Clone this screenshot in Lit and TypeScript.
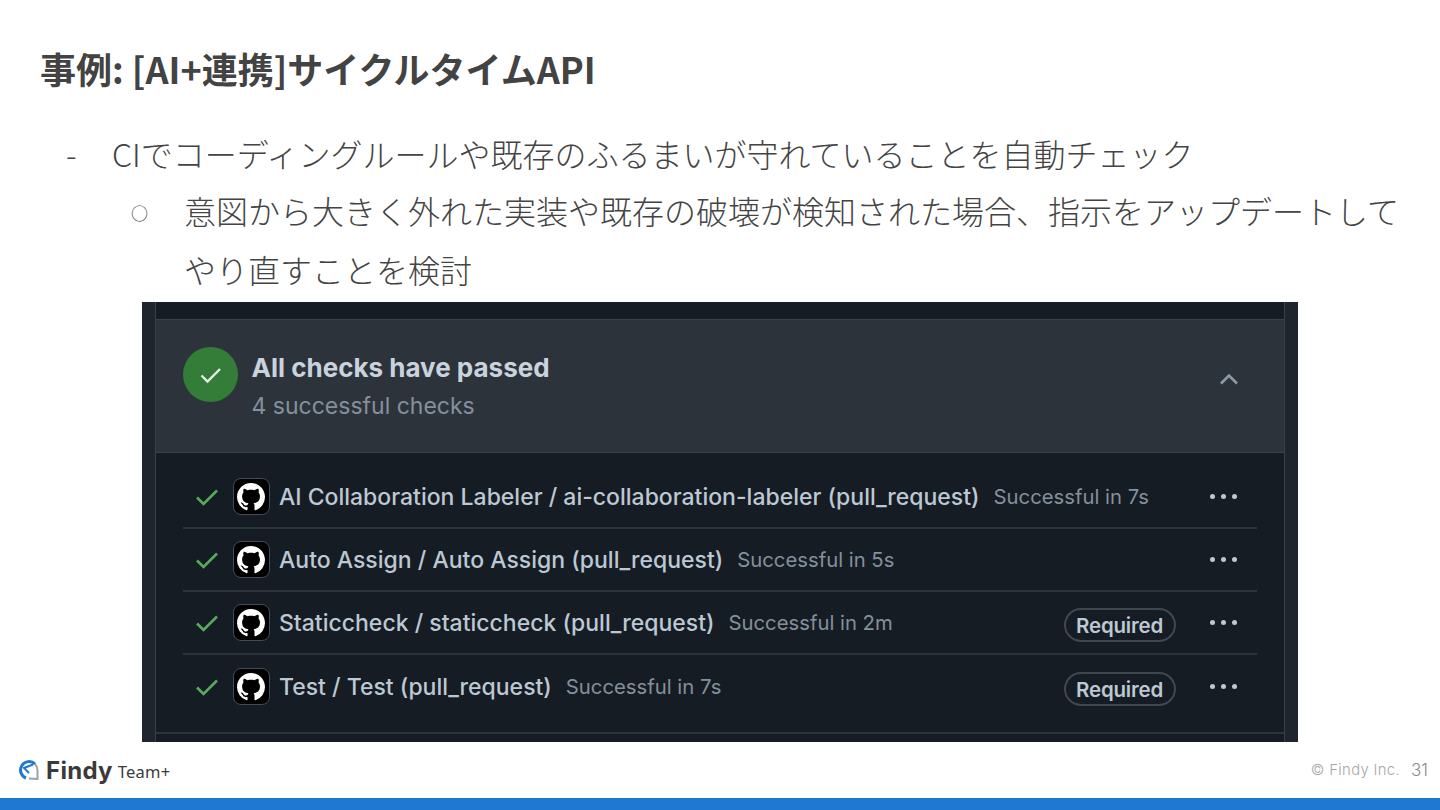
import { LitElement, html, css, svg } from 'lit';
import { customElement } from 'lit/decorators.js';

const GITHUB_MARK = svg`<path fill="#fff" d="M8 0c4.42 0 8 3.58 8 8a8.013 8.013 0 0 1-5.45 7.59c-.4.08-.55-.17-.55-.38 0-.27.01-1.13.01-2.2 0-.75-.25-1.23-.54-1.48 1.78-.2 3.65-.88 3.65-3.95 0-.88-.31-1.59-.82-2.15.08-.2.36-1.02-.08-2.12 0 0-.67-.22-2.2.82-.64-.18-1.32-.27-2-.27-.68 0-1.36.09-2 .27-1.53-1.03-2.2-.82-2.2-.82-.44 1.1-.16 1.92-.08 2.12-.51.56-.82 1.28-.82 2.15 0 3.06 1.86 3.75 3.64 3.95-.23.2-.44.55-.51 1.07-.46.21-1.61.55-2.33-.66-.15-.24-.6-.83-1.23-.82-.67.01-.27.38.01.53.34.19.73.9.82 1.13.16.45.68 1.31 2.69.94 0 .67.01 1.3.01 1.49 0 .21-.15.45-.55.38A7.995 7.995 0 0 1 0 8c0-4.42 3.58-8 8-8Z"/>`;

const checks: { name: string, status: string, required: boolean }[] = [
    { name: "AI Collaboration Labeler / ai-collaboration-labeler (pull_request)", status: "Successful in 7s", required: false },
    { name: "Auto Assign / Auto Assign (pull_request)", status: "Successful in 5s", required: false },
    { name: "Staticcheck / staticcheck (pull_request)", status: "Successful in 2m", required: true },
    { name: "Test / Test (pull_request)", status: "Successful in 7s", required: true },
];

@customElement('app-root')
export class AppRoot extends LitElement {

    static styles = css`
    :host{
        display: block;
        width: 1440px;
        height: 810px;
        overflow: hidden;
        background: #fff;
        font-family: "Noto Sans CJK JP", sans-serif;
        color: #444;
    }
    .slide{
        display: flex;
        flex-direction: column;
        height: 810px;
    }
    h1{
        margin: 0;
        padding: 42px 0 0 40px;
        height: 82px;
        font-size: 36px;
        line-height: 52px;
        font-weight: 700;
        color: #434343;
    }
    .bullets{
        margin: 0;
        padding: 0;
        list-style: none;
        font-size: 32px;
        font-weight: 300;
        line-height: 59px;
        height: 178px;
    }
    .bullets li{
        display: flex;
    }
    .bullets li:first-child{
        height: 57px;
    }
    .dash{
        width: 46px;
        padding-left: 66px;
        flex: none;
    }
    .circle{
        width: 54px;
        padding-left: 131px;
        padding-top: 2px;
        flex: none;
        font-size: 17px;
        font-weight: 400;
    }
    .wrapped{
        width: 1216px;
        margin-left: -1px;
    }
    .shot{
        align-self: flex-start;
        margin-left: 142px;
        width: 1156px;
        height: 440px;
        flex: none;
        box-sizing: border-box;
        overflow: hidden;
        background: #1f252d;
        padding: 0 13px;
        font-family: Inter, sans-serif;
    }
    .panel{
        height: 440px;
        background: #161c23;
        border-left: 1px solid #3a414a;
        border-right: 1px solid #3a414a;
        padding-top: 17px;
        box-sizing: border-box;
    }
    .summary{
        height: 134px;
        box-sizing: border-box;
        background: #2d333b;
        border-top: 1px solid #3a414a;
        border-bottom: 1px solid #3a414a;
        display: flex;
        align-items: flex-start;
        padding: 27px 44px 0 27px;
    }
    .badge{
        width: 55px;
        height: 55px;
        border-radius: 50%;
        background: #347d39;
        display: flex;
        align-items: center;
        justify-content: center;
        flex: none;
        margin-right: 13.5px;
    }
    .summary-text{
        flex: 1;
        margin-top: 2px;
    }
    .summary-title{
        font-size: 26px;
        line-height: 38px;
        font-weight: 700;
        color: #c9d3de;
    }
    .summary-sub{
        font-size: 23px;
        line-height: 38px;
        color: #84909c;
    }
    .chevron{
        margin-top: 25px;
    }
    .rows{
        padding: 13px 27px 0;
        height: 281px;
        box-sizing: border-box;
        border-bottom: 2px solid #2d333b;
    }
    .row{
        height: 63px;
        box-sizing: border-box;
        display: flex;
        align-items: center;
        border-bottom: 2px solid #2d333b;
        padding-left: 12px;
    }
    .row:last-child{
        border-bottom: 0;
    }
    .tick{
        width: 24px;
        flex: none;
        margin-right: 13.5px;
    }
    .app-icon{
        width: 37px;
        height: 37px;
        box-sizing: border-box;
        border-radius: 8px;
        background: #000;
        border: 1px solid #444c56;
        display: flex;
        align-items: center;
        justify-content: center;
        flex: none;
        margin-right: 9.5px;
    }
    .name{
        font-size: 23px;
        font-weight: 500;
        color: #bcc8d3;
        white-space: nowrap;
    }
    .status{
        font-size: 20.3px;
        color: #84909c;
        margin-left: 14px;
        white-space: nowrap;
    }
    .spacer{
        flex: 1;
    }
    .required{
        height: 34px;
        box-sizing: border-box;
        border: 2px solid #3f4750;
        border-radius: 17px;
        padding: 0 10.5px;
        font-size: 20.5px;
        line-height: 31px;
        font-weight: 600;
        letter-spacing: -0.2px;
        color: #bcc8d3;
        margin: 5px 34.5px 0 0;
    }
    .dots{
        display: flex;
        gap: 6px;
        margin: -1px 20px 0 0;
    }
    .dots i{
        width: 5px;
        height: 5px;
        border-radius: 50%;
        background: #bcc8d3;
    }
    footer{
        flex: 1;
        display: flex;
        align-items: center;
        padding: 0 12px 0 18px;
    }
    .logo{
        display: flex;
        align-items: center;
    }
    .findy{
        font-family: Inter, sans-serif;
        font-weight: 700;
        font-size: 24px;
        letter-spacing: .3px;
        color: #3a3a3a;
        margin-left: 6px;
    }
    .team{
        font-family: "Noto Sans", sans-serif;
        font-size: 16.5px;
        letter-spacing: .2px;
        color: #3a3a3a;
        margin: 3px 0 0 5px;
    }
    .copy{
        margin-left: auto;
        font-family: Inter, sans-serif;
        font-size: 14.8px;
        font-weight: 300;
        color: #a6a6a6;
        letter-spacing: .35px;
    }
    .page{
        font-family: Inter, sans-serif;
        font-size: 17px;
        font-weight: 300;
        color: #8c8c8c;
        margin-left: 11px;
    }
    .bar{
        height: 12px;
        flex: none;
        background: #1f78d1;
    }
    `;

    private renderRow(check: { name: string, status: string, required: boolean }) {
        return html`
          <div class="row">
            <svg class="tick" width="24" height="20" viewBox="0 0 24 20" fill="none">
              <path d="M2 10.5 L8.5 17 L22 3.5" stroke="#57ab5a" stroke-width="2.6"/>
            </svg>
            <div class="app-icon">
              <svg width="28" height="28" viewBox="0 0 16 16">${GITHUB_MARK}</svg>
            </div>
            <span class="name">${check.name}</span>
            <span class="status">${check.status}</span>
            <span class="spacer"></span>
            ${check.required ? html`<span class="required">Required</span>` : ""}
            <span class="dots"><i></i><i></i><i></i></span>
          </div>
        `;
    }

    render() {
        return html`
          <div class="slide">
            <h1>事例: [AI+連携]サイクルタイムAPI</h1>
            <ul class="bullets">
              <li><span class="dash">-</span><span>CIでコーディングルールや既存のふるまいが守れていることを自動チェック</span></li>
              <li><span class="circle">○</span><span class="wrapped">意図から大きく外れた実装や既存の破壊が検知された場合、指示をアップデートしてやり直すことを検討</span></li>
            </ul>
            <div class="shot">
              <div class="panel">
                <div class="summary">
                  <div class="badge">
                    <svg width="24" height="20" viewBox="0 0 24 20" fill="none">
                      <path d="M2.5 10.5 L8.5 16.5 L21 4" stroke="#e6f0e8" stroke-width="2.4"/>
                    </svg>
                  </div>
                  <div class="summary-text">
                    <div class="summary-title">All checks have passed</div>
                    <div class="summary-sub">4 successful checks</div>
                  </div>
                  <svg class="chevron" width="22" height="14" viewBox="0 0 22 14" fill="none">
                    <path d="M3 11.5 L11 3.5 L19 11.5" stroke="#8d9aa7" stroke-width="2.6"/>
                  </svg>
                </div>
                <div class="rows">
                  ${checks.map(check => this.renderRow(check))}
                </div>
              </div>
            </div>
            <footer>
              <div class="logo">
                <svg width="22" height="24" viewBox="0 0 22 24" fill="none">
                  <path d="M17 6 A8.5 8.5 0 0 1 19.5 12 C19.5 16 19.5 18 19.5 21 L11 20.5" stroke="#9aa3ab" stroke-width="2"/>
                  <path d="M17 6 A8.5 8.5 0 1 0 8 20" stroke="#1f78d1" stroke-width="3"/>
                  <path d="M15 6.5 L6 10 L11 15" stroke="#1f78d1" stroke-width="2"/>
                </svg>
                <span class="findy">Findy</span>
                <span class="team">Team+</span>
              </div>
              <span class="copy">© Findy Inc.</span>
              <span class="page">31</span>
            </footer>
            <div class="bar"></div>
          </div>
        `;
    }
}
